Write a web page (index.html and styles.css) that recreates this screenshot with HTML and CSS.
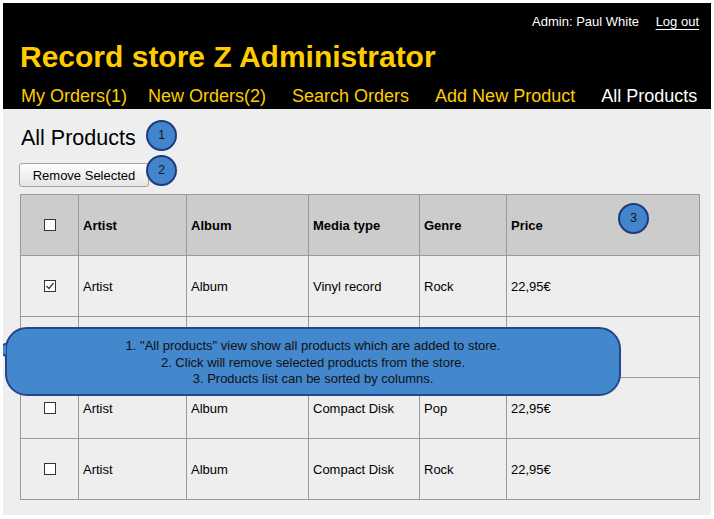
FILE: index.html
```html
<!DOCTYPE html>
<html lang="en">
<head>
<meta charset="utf-8">
<title>Record store Z Administrator</title>
<link rel="stylesheet" href="styles.css">
</head>
<body>
<div class="frame">
  <header class="top">
    <div class="user">Admin: Paul White <a href="#" class="logout">Log out</a></div>
    <h1 class="title">Record store Z Administrator</h1>
    <nav class="nav">
      <a href="#" class="nav-link first">My Orders(1)</a>
      <a href="#" class="nav-link">New Orders(2)</a>
      <a href="#" class="nav-link">Search Orders</a>
      <a href="#" class="nav-link">Add New Product</a>
      <a href="#" class="nav-link active">All Products</a>
    </nav>
  </header>
  <main class="content">
    <h2 class="page-title">All Products</h2>
    <button class="btn" type="button">Remove Selected</button>
    <div class="grid">
      <div class="cell head center"><span class="cb"></span></div>
      <div class="cell head">Artist</div>
      <div class="cell head">Album</div>
      <div class="cell head">Media type</div>
      <div class="cell head">Genre</div>
      <div class="cell head">Price</div>

      <div class="cell center"><span class="cb"><svg class="tick" viewBox="0 0 10 10" width="10" height="10"><polyline points="1.5,5 4,7.5 8.5,2" fill="none" stroke="#333" stroke-width="1.2"/></svg></span></div>
      <div class="cell">Artist</div>
      <div class="cell">Album</div>
      <div class="cell">Vinyl record</div>
      <div class="cell">Rock</div>
      <div class="cell">22,95€</div>

      <div class="cell center"><span class="cb"></span></div>
      <div class="cell"></div>
      <div class="cell"></div>
      <div class="cell"></div>
      <div class="cell"></div>
      <div class="cell"></div>

      <div class="cell center"><span class="cb"></span></div>
      <div class="cell">Artist</div>
      <div class="cell">Album</div>
      <div class="cell">Compact Disk</div>
      <div class="cell">Pop</div>
      <div class="cell">22,95€</div>

      <div class="cell center"><span class="cb"></span></div>
      <div class="cell">Artist</div>
      <div class="cell">Album</div>
      <div class="cell">Compact Disk</div>
      <div class="cell">Rock</div>
      <div class="cell">22,95€</div>
    </div>
  </main>

  <span class="badge b1">1</span>
  <span class="badge b2">2</span>
  <span class="badge b3">3</span>

  <div class="callout">
    <svg class="tail" viewBox="0 0 12 16" width="12" height="16"><polygon points="12,0 0,6 12,14" fill="#4387cd" stroke="#25468a" stroke-width="2"/></svg>
    <p class="callout-text">1. "All products" view show all products which are added to store.<br>2. Click will remove selected products from the store.<br>3. Products list can be sorted by columns.</p>
  </div>
</div>
</body>
</html>
```

FILE: styles.css
```css
* { box-sizing: border-box; }
html, body { margin: 0; padding: 0; background: #ffffff; }
body { padding: 3px; font-family: "Liberation Sans", Arial, sans-serif; }

.frame {
  position: relative;
  width: 708px;
  height: 512px;
  background: #eeeeee;
  overflow: hidden;
}

.top {
  background: #000000;
  height: 106px;
  padding: 11px 12px 0 17px;
}
.user {
  color: #ffffff;
  font-size: 13px;
  line-height: 16px;
  text-align: right;
}
.logout {
  color: #ffffff;
  margin-left: 13px;
  text-decoration: underline;
  text-underline-offset: 3px;
}
.title {
  margin: 11px 0 0 0;
  color: #ffcc00;
  font-size: 30px;
  line-height: 32px;
  font-weight: bold;
}
.nav {
  display: flex;
  column-gap: 26px;
  margin-top: 13px;
  padding-left: 1px;
}
.nav-link {
  color: #ffcc00;
  font-size: 18px;
  line-height: 20px;
  text-decoration: none;
}
.nav-link.first { margin-right: -5px; }
.nav-link.active { color: #ffffff; }

.content {
  padding: 16px 0 0 16px;
}
.page-title {
  margin: 0 0 12px 2px;
  font-size: 21.5px;
  line-height: 26px;
  font-weight: normal;
  color: #000000;
}
.btn {
  display: block;
  width: 130px;
  height: 24px;
  padding: 0;
  font-family: "Liberation Sans", Arial, sans-serif;
  font-size: 13px;
  color: #000000;
  background: linear-gradient(#fdfdfd, #e6e6e6);
  border: 1px solid #a7a29a;
  border-radius: 3px;
}

.grid {
  display: grid;
  grid-template-columns: 58px 108px 122px 111px 87px 193px;
  grid-auto-rows: 61px;
  width: 680px;
  margin: 7px 0 0 1px;
  border-right: 1px solid #999999;
  border-bottom: 1px solid #999999;
}
.cell {
  display: flex;
  align-items: center;
  padding-left: 4px;
  border-left: 1px solid #999999;
  border-top: 1px solid #999999;
  font-size: 13px;
  color: #000000;
}
.cell.head {
  background: #cccccc;
  font-weight: bold;
}
.cell.center {
  justify-content: center;
  padding-left: 0;
}
.cb {
  display: inline-flex;
  align-items: center;
  justify-content: center;
  width: 12px;
  height: 12px;
  background: #ffffff;
  border: 1px solid #333333;
}

.badge {
  position: absolute;
  width: 31px;
  height: 31px;
  border-radius: 50%;
  background: #4285cc;
  border: 2px solid #1d3b7c;
  color: #111111;
  font-size: 12px;
  line-height: 26px;
  text-align: center;
}
.b1 { left: 143px; top: 117px; }
.b2 { left: 143px; top: 152px; }
.b3 { left: 615px; top: 200px; }

.callout {
  position: absolute;
  left: 2px;
  top: 324px;
  width: 616px;
  height: 69px;
  background: #4387cd;
  border: 2px solid #25468a;
  border-radius: 22px;
}
.tail {
  position: absolute;
  left: -12px;
  top: 14px;
}
.callout-text {
  margin: 9px 0 0 0;
  text-align: center;
  font-size: 13px;
  line-height: 16.5px;
  color: #111111;
}
```
